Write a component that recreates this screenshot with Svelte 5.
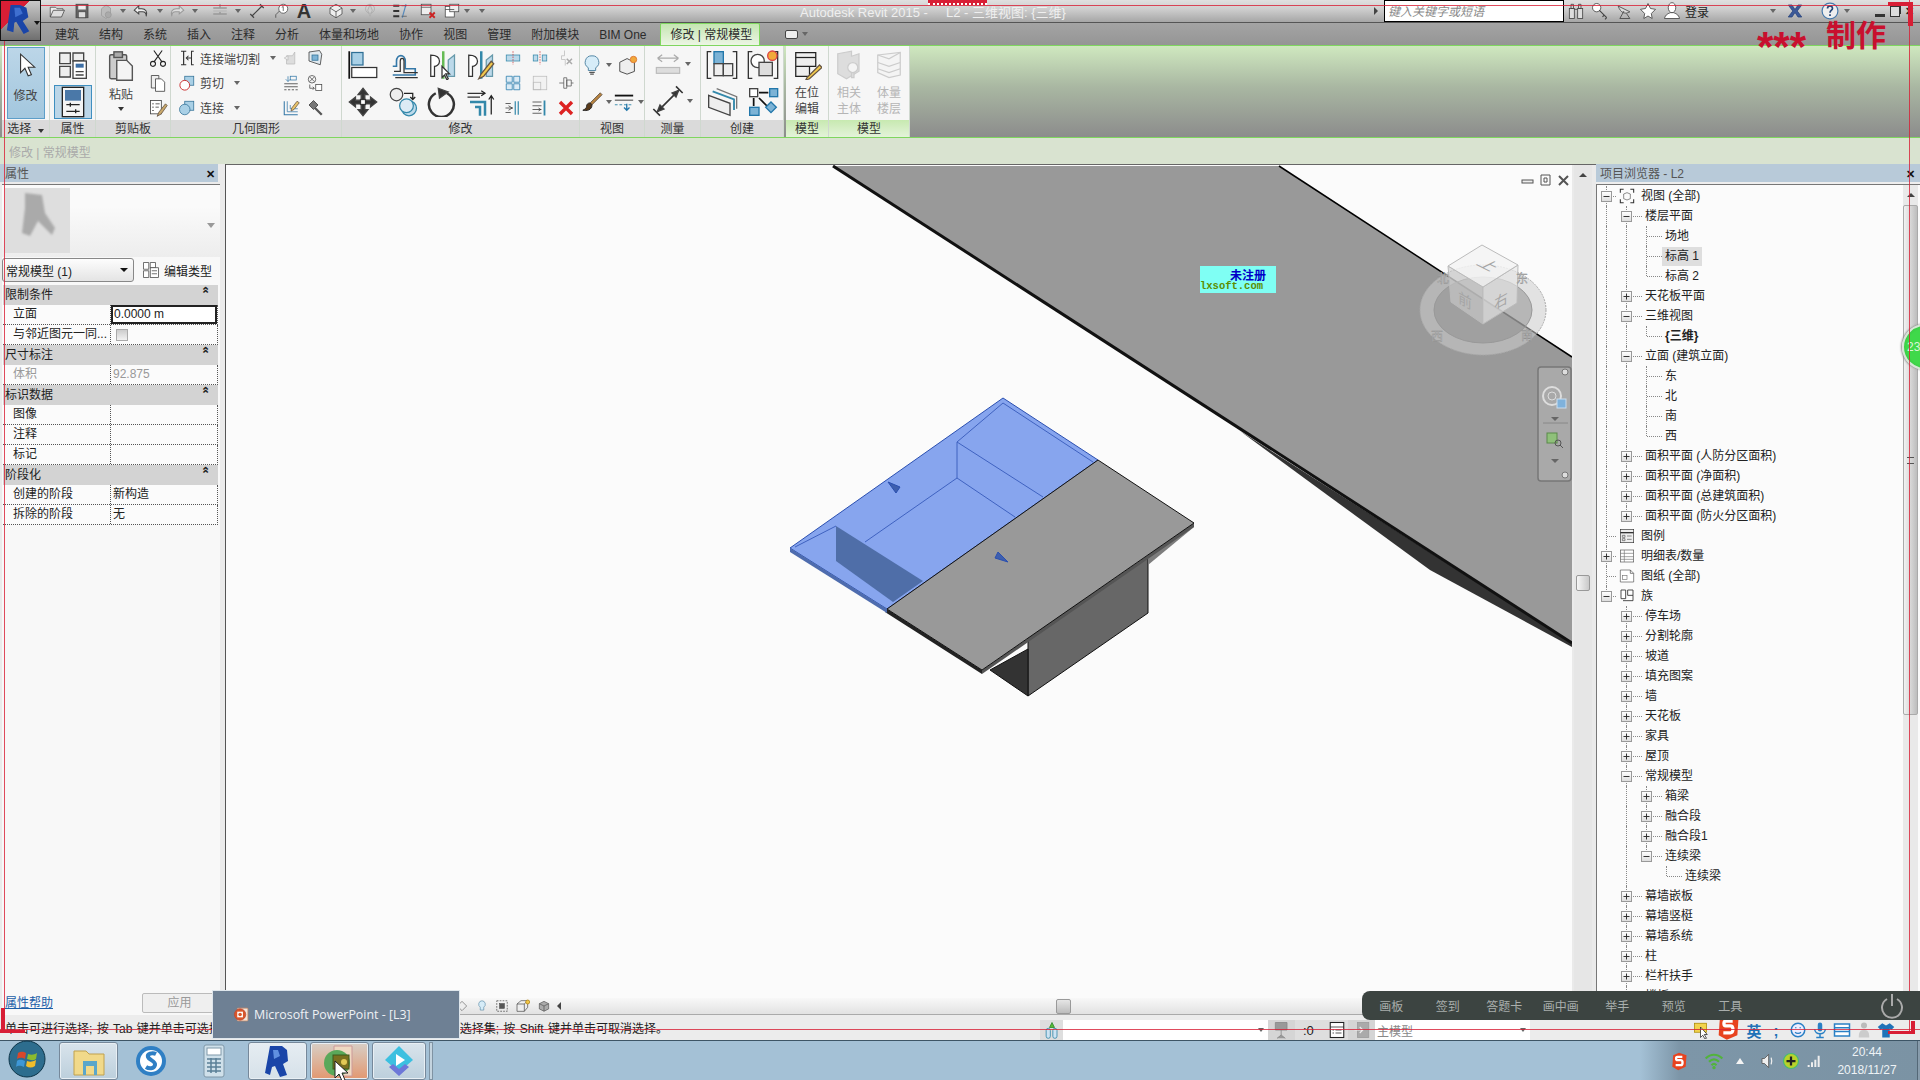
<script>
	const I = {
		open: '<path d="M3 7h7l2 2h8v3H8l-5 8z" fill="#eee"/><path d="M3 20l4-9h15l-4 9z" fill="#ddd"/>',
		save: '<rect x="4" y="3" width="16" height="18" fill="#666"/><rect x="7" y="4" width="10" height="6" fill="#eee" stroke="none"/><rect x="7" y="13" width="10" height="8" fill="#ddd"/>',
		sync: '<path d="M6 9l6-5 6 4v9l-6 5-6-4z" fill="#bbb" stroke="#999"/><circle cx="15" cy="17" r="4" fill="#aaa" stroke="#999"/>',
		undo: '<path d="M9 5L3 11l6 5v-3h5c3 0 5 2 5 6 2-6-1-10-6-10H9z" fill="#eee" stroke-width="1.4"/>',
		redo: '<path d="M15 5l6 6-6 5v-3h-5c-3 0-5 2-5 6-2-6 1-10 6-10h4z" fill="#ddd" stroke="#999" stroke-width="1.4"/>',
		thin: '<path d="M3 8h18M3 16h18M12 3v4M12 13v3" stroke="#999" stroke-width="2"/><rect x="3" y="11" width="18" height="2" fill="#bbb" stroke="none"/>',
		dim: '<path d="M5 19L19 5M8 21l-5-5M21 8l-5-5" stroke-width="1.6"/>',
		tag: '<circle cx="15" cy="9" r="6" fill="#fff"/><path d="M10 12l-5 5v4M13 7l2-1v6" />',
		threeD: '<path d="M12 3l8 5v8l-8 5-8-5V8z" fill="#eee"/><path d="M4 8l8 5 8-5M12 13v8"/>',
		bulbS: '<path d="M12 3l3 8-3 8-3-8z" fill="#ccc" stroke="#aaa"/><circle cx="12" cy="9" r="6" stroke="#aaa"/>',
		thinLines: '<path d="M3 5h8M3 12h8M3 19h8" stroke="#333" stroke-width="2.5"/><path d="M20 3l-5 18" stroke="#5588bb" stroke-width="1.5"/><path d="M14 5h7M14 19h7" stroke="#555"/>',
		closeWin: '<rect x="3" y="3" width="13" height="14" fill="#eee"/><path d="M3 7h13"/><path d="M14 14l7 7M21 14l-7 7" stroke="#c22" stroke-width="2.4"/>',
		switchWin: '<rect x="3" y="6" width="12" height="14" fill="#fff"/><rect x="9" y="3" width="12" height="10" fill="#eee"/><path d="M3 10h12" />',
		binoc: '<rect x="4" y="9" width="6" height="12" fill="#ddd"/><rect x="14" y="9" width="6" height="12" fill="#ddd"/><path d="M6 4h3v5H6zM15 4h3v5h-3zM10 10h4"/>',
		key: '<circle cx="8" cy="8" r="5" fill="#fff"/><path d="M11 11l9 9M17 17l-2 2M20 20l-2 2" stroke-width="1.4"/>',
		sat: '<path d="M5 6c3 9 9 10 14 7z" fill="#ddd"/><path d="M12 12l-5 9h12l-4-6" />',
		star: '<path d="M12 3l3 6 6 1-5 5 1 6-5-3-5 3 1-6-5-5 6-1z" fill="#fff"/>',
		user: '<ellipse cx="12" cy="8" rx="4.5" ry="6" fill="#fff"/><path d="M3 21c1-5 5-6 7-7h4c2 1 6 2 7 7z" fill="#fff"/>',
		xch: '<path d="M3 4h5l4 6 4-6h5l-6 8 6 8h-5l-4-6-4 6H3l6-8z" fill="#3d5a9a" stroke="#24407a"/>',
		help: '<circle cx="12" cy="12" r="9.5" fill="#eee" stroke="#47a" stroke-width="1.4"/><path d="M9 9c0-4 6-4 6 0 0 2-3 2-3 5M12 16v2" stroke="#247" stroke-width="2"/>',
		pointer: '<path d="M7 2v17l4-4 3 7 3-1-3-7h6z" fill="#fff" stroke="#333"/>',
		cubes: '<path d="M2 3h8v8H2zM2 13h8v8H2zM12 3h8v6h-8z" fill="#eee"/><rect x="12" y="9" width="10" height="13" fill="#fff"/><rect x="14" y="11" width="6" height="3" fill="#3c6ea5" stroke="none"/><path d="M14 17h6M14 19.5h6"/>',
		props: '<rect x="4" y="1" width="16" height="22" fill="#f4f4f4" stroke="#222"/><rect x="6" y="3" width="12" height="8" fill="#4a78a8" stroke="none"/><path d="M7 14h10M7 19h10M10 12.5v3M14 17.5v3" stroke="#222"/>',
		paste: '<rect x="4" y="4" width="12" height="17" rx="1" fill="#ccc" stroke="#555"/><rect x="7" y="2" width="6" height="4" fill="#aaa" stroke="#555"/><path d="M9 8h7l4 4v10H9z" fill="#f4f4f4" stroke="#555"/>',
		cut: '<path d="M7 3l10 14M17 3L7 17" stroke="#222" stroke-width="1.3"/><circle cx="6" cy="19" r="3" stroke="#222" stroke-width="1.3"/><circle cx="18" cy="19" r="3" stroke="#222" stroke-width="1.3"/>',
		copy: '<path d="M4 3h9v15H4z" fill="#eee"/><path d="M9 7h7l4 4v11H9z" fill="#fff"/>',
		match: '<rect x="3" y="3" width="13" height="16" fill="#fff"/><path d="M5 7h2M9 7h5M5 11h2M9 11h4M5 15h2"/><path d="M21 7l-8 10-2 5 5-3 7-10z" fill="#c9a86b" stroke="#654"/>',
		joinCut: '<path d="M4 3h7M4 21h7M7.5 3v18" stroke="#333" stroke-width="1.6"/><path d="M21 3h-3v18h3M18 12h-7M14 9l-3 3 3 3" stroke="#333" stroke-width="1.4"/>',
		cutBox: '<rect x="9" y="3" width="12" height="12" fill="#a9d0e6" stroke="#2f6f95"/><circle cx="9" cy="15" r="6.5" fill="#fff" stroke="#c33" stroke-width="1.3"/>',
		joinBox: '<rect x="9" y="3" width="12" height="12" fill="#a9d0e6" stroke="#2f6f95"/><circle cx="9" cy="14" r="7" fill="#a9d0e6" stroke="#2f6f95"/>',
		geoA: '<path d="M6 9h8l3-5v16H6z" fill="#ddd" stroke="#bbb"/><path d="M3 12l5-3v6z" fill="#eee" stroke="#bbb"/>',
		geoB: '<path d="M4 4l14-2 3 5-2 14-15-5z" fill="#dfe8ee" stroke="#333"/><rect x="8" y="8" width="8" height="7" fill="#7cb3d6" stroke="#2f6f95"/>',
		geoC: '<path d="M3 13h18M3 17h18" stroke="#333"/><path d="M3 21h18" stroke="#333" stroke-dasharray="3 2"/><path d="M8 3v7M5 7l3 3 3-3" stroke="#3478a8"/><rect x="11" y="3" width="8" height="5" stroke="#3478a8"/>',
		geoD: '<circle cx="8" cy="7" r="5"/><path d="M5 4l6 6M11 4l-6 6"/><rect x="13" y="14" width="8" height="8" fill="#fff"/><path d="M5 14v5h6M9 17l2 2-2 2"/>',
		paintWall: '<path d="M3 3v18h18" stroke="#3478a8" stroke-width="1.4"/><path d="M7 3v14h14M11 8v5h10" stroke="#3478a8"/><path d="M20 3l-7 9-1 4 4-2 7-9z" fill="#e8c36a" stroke="#654"/>',
		hammer: '<path d="M4 8l6-6 6 6-6 6z" fill="#777" stroke="#333"/><path d="M12 12l9 9" stroke="#555" stroke-width="3"/>',
		align: '<rect x="3" y="2" width="9" height="10" fill="#a9d0e6" stroke="#2f6f95"/><rect x="3" y="14" width="20" height="8" fill="#fff" stroke="#333"/><path d="M1 1v22" stroke="#111" stroke-width="1.4"/>',
		offset: '<path d="M3 20h18v-5h-8V9c0-6-7-6-7 0v4H3" fill="none" stroke="#3478a8" stroke-width="1.3"/><path d="M5 22h18M4 17h5V9c0-3 3-3 3 0v9h11" stroke="#333"/>',
		mirrorA: '<path d="M3 4c5 0 7 2 7 5s-3 4-4 4v8H3z" fill="#fff" stroke="#333"/><path d="M13 1v22" stroke="#6b5" stroke-width="2"/><path d="M22 4l-5 4v13h5z" fill="#bcd9ea" stroke="#69a"/><path d="M12 13v9l2-2 2 4 1-1-2-4h3z" fill="#fff" stroke="#333"/>',
		mirrorB: '<path d="M3 4c5 0 7 2 7 5s-3 4-4 4v8H3z" fill="#fff" stroke="#333"/><path d="M13 1v22" stroke="#38a" stroke-width="2"/><path d="M22 4l-5 4v13h5z" fill="#bcd9ea" stroke="#69a"/><path d="M21 9l-8 10-2 4 4-2 8-10z" fill="#f2c94c" stroke="#654"/>',
		move: '<path d="M12 1l4 5h-2.5v4.500H18V8l5 4-5 4v-2.500h-4.500V18H16l-4 5-4-5h2.500v-4.500H6V16l-5-4 5-4v2.500h4.500V6H8z" fill="#333"/><rect x="10" y="10" width="4" height="4" fill="#fff" stroke="#333"/>',
		copyEl: '<circle cx="6" cy="6" r="5" fill="#eee"/><circle cx="16" cy="17" r="6" fill="#bcd9ea" stroke="#38a"/><circle cx="14" cy="15" r="5.500" fill="#dcebf5" stroke="#38a"/><path d="M12 5h7v5M17 8l2 2 2-2" stroke="#222"/>',
		rotate: '<path d="M7 5a10 10 0 1 0 9 0" stroke="#333" stroke-width="2"/><path d="M9 1l8 3-7 5z" fill="#333"/>',
		trim: '<path d="M2 5h14M2 8h10" stroke="#333"/><path d="M4 12h12v11M8 16h4v7" stroke="#38a" stroke-width="2"/><path d="M21 22V8M19 10l2-3 2 3M13 3l3 2-3 2" stroke="#222"/>',
		splitA: '<rect x="3" y="8" width="18" height="8" fill="#bcd9ea" stroke="#38a"/><path d="M12 3v18" stroke="#c33" stroke-dasharray="2 1.500"/>',
		splitB: '<rect x="3" y="8" width="6" height="8" fill="#bcd9ea" stroke="#38a"/><rect x="15" y="8" width="6" height="8" fill="#bcd9ea" stroke="#38a"/><path d="M12 3v18" stroke="#c33" stroke-dasharray="2 1.500"/>',
		pinX: '<path d="M10 2v7H6v5h5v8" stroke="#bbb"/><path d="M13 13l7 7M20 13l-7 7" stroke="#aaa" stroke-width="2"/>',
		array: '<path d="M3 3h8v8H3zM13 3h8v8h-8zM3 13h8v8H3zM13 13h8v8h-8z" fill="#dcebf5" stroke="#27a"/>',
		scale: '<rect x="3" y="3" width="18" height="18" fill="#f2f2f2" stroke="#bbb"/><rect x="3" y="11" width="10" height="10" stroke="#bbb"/>',
		unpin: '<path d="M3 12h6M9 5h4v14H9zM13 8h6v8h-6zM19 12h3" stroke="#555"/>',
		ext: '<path d="M2 6h7M2 12h10M2 18h7M6 9l5 3-5 3" stroke="#333"/><path d="M15 3v18M19 3v18" stroke="#38a" stroke-width="1.6"/>',
		ext2: '<path d="M2 4h12M2 9h12M2 14h12M2 19h12M10 12l3 2-3 2" stroke="#333"/><path d="M18 2v20" stroke="#38a" stroke-width="2.4"/>',
		del: '<path d="M4 4l16 16M20 4L4 20" stroke="#d22" stroke-width="4.500"/>',
		bulb: '<path d="M12 2a7 7 0 0 0-4 13v3h8v-3a7 7 0 0 0-4-13z" fill="#d6ecf8" stroke="#4a7f9f"/><path d="M9 20h6M10 22h4" stroke="#555" stroke-width="1.500"/>',
		sun: '<path d="M3 9l8-4 8 4v10l-8 3-8-3z" fill="#eee"/><circle cx="18" cy="6" r="3.500" fill="#f2a93b" stroke="#d73"/>',
		brush: '<path d="M21 2L10 13l2 2L23 4z" fill="#b98440" stroke="#654"/><path d="M10 13c-3 0-4 2-4 4 0 2-2 3-4 4 4 1 10 0 10-6z" fill="#5a3b1a" stroke="#222"/>',
		lines: '<path d="M2 5h20" stroke="#111" stroke-width="2"/><path d="M2 10h20" stroke="#333"/><path d="M2 15h20" stroke="#38a" stroke-dasharray="3 2"/><path d="M15 14v7M12 18l3 3 3-3" stroke="#27a" stroke-width="1.400"/>',
		measure: '<path d="M3 7h18M3 7l4-3M3 7l4 3M21 7l-4-3M21 7l-4 3" stroke="#aaa"/><rect x="2" y="15" width="20" height="5" fill="#ddd" stroke="#bbb"/>',
		dimL: '<path d="M4 20L20 4M1 18l5 5M18 1l5 5" stroke="#333" stroke-width="1.200"/><path d="M4 20l5-2-3-3zM20 4l-5 2 3 3z" fill="#333"/>',
		crA: '<path d="M4 2H1v20h3M20 2h3v20h-3" stroke="#333"/><rect x="6" y="2" width="7" height="9" fill="#7cb3d6" stroke="#27a"/><rect x="6" y="11" width="7" height="9" fill="#eee"/><rect x="13" y="11" width="7" height="9" fill="#eee"/>',
		crB: '<path d="M4 2H1v20h3M20 2h3v20h-3" stroke="#333"/><circle cx="8" cy="9" r="5" fill="#fff"/><rect x="9" y="10" width="10" height="10" fill="#ddd"/><circle cx="19" cy="5" r="3.500" fill="#f2a93b" stroke="#d44"/>',
		crC: '<path d="M2 7l16 6v9L2 16z" fill="#eee"/><path d="M5 4l16 6v8" stroke="#38a" stroke-width="1.400"/><path d="M8 2l15 6v9" stroke="#777"/>',
		crD: '<rect x="2" y="2" width="6" height="6" fill="#fff"/><rect x="17" y="2" width="6" height="6" fill="#7cb3d6" stroke="#27a"/><path d="M9 5h7M5 9v6M9 9l6 6" stroke="#111" stroke-width="1.300"/><rect x="2" y="16" width="7" height="6" fill="#7cb3d6" stroke="#27a"/><path d="M18 12l4 4-4 4-4-4z" fill="#7cb3d6" stroke="#27a"/>',
		inplace: '<path d="M3 2h16v11H3zM3 13h11v8H3z" fill="#eee" stroke="#222"/><path d="M3 6h16" stroke="#222"/><path d="M22 12L12 22l-1 2 3-1L24 14z" fill="#f2c94c" stroke="#654"/>',
		hostOff: '<path d="M3 3l11-2v4l6-2v14l-10 6-7-4z" fill="#ddd" stroke="#ccc"/><circle cx="15" cy="14" r="4" fill="#f4f4f4" stroke="#ccc"/><path d="M14 18h2v4h-2z" fill="#ddd" stroke="#ccc"/>',
		massOff: '<path d="M3 4l18-2v18l-9 2-9-4z" fill="#f4f4f4" stroke="#ccc"/><path d="M3 10l9 3 9-3M3 15l9 3 9-3M3 4l9 3 9-5" stroke="#ccc"/>',
		editType: '<path d="M2 2h7v9H2zM2 13h7v9H2zM11 2h7v7h-7z" fill="#fff"/><rect x="11" y="9" width="11" height="13" fill="#fff"/><path d="M13 13h7M13 17h7"/>',
		legend: '<rect x="2" y="2" width="20" height="20" fill="#eee" stroke="#333"/><path d="M2 7h20" stroke="#333" stroke-width="2"/><path d="M5 11h4v3H5zM5 16h4v3H5zM12 12h7M12 17h7" stroke="#555"/>',
		sched: '<rect x="2" y="3" width="20" height="18" fill="#fff" stroke="#555"/><path d="M2 8h20M2 13h20M2 17h20M8 3v18" stroke="#777"/>',
		sheet: '<path d="M2 3h15l5 5v13H2z" fill="#fff" stroke="#555"/><path d="M17 3v5h5"/><rect x="5" y="11" width="7" height="6" stroke="#777"/>',
		view3: '<path d="M2 7V2h5M17 2h5v5M22 17v5h-5M7 22H2v-5" stroke="#333" stroke-width="1.600"/><path d="M7 9l5-2 5 2v7l-5 2-5-2z" stroke="#555"/>',
		fam: '<path d="M3 3h7v13H3zM13 3h8v8h-8zM6 19h15V11" fill="#fff" stroke="#333" stroke-width="1.300"/>',
		wset: '<rect x="5" y="10" width="5" height="12" rx="2.500" fill="#cde3f2" stroke="#38a"/><rect x="13" y="10" width="5" height="12" rx="2.500" fill="#cde3f2" stroke="#38a"/><path d="M12 3l-3 6h6z" fill="#5b3" stroke="#383"/>',
		filter: '<path d="M4 3h14v9H4zM11 12v6M6 22l5-4 5 4" stroke="#888" fill="#999"/>',
		editBar: '<rect x="3" y="2" width="18" height="20" fill="#fff" stroke="#222" stroke-width="1.400"/><path d="M3 8h18M6 12h2M10 12h8M6 16h2M10 16h8" stroke="#222"/>',
		exitG: '<rect x="6" y="2" width="15" height="20" fill="#aaa" stroke="#999"/><path d="M2 12h11M9 8l4 4-4 4" stroke="#eee" stroke-width="1.500"/>',
		sun2: '<path d="M12 4l8 8-8 8-8-8z" fill="#eee" stroke="#555"/>',
		bulbVB: '<path d="M12 3a6 6 0 0 0-3 11v5h6v-5a6 6 0 0 0 -3-11z" stroke="#4a7f9f" fill="#d6ecf8"/>',
		shadow: '<rect x="3" y="3" width="18" height="18" stroke="#222" stroke-dasharray="3 2"/><rect x="8" y="8" width="8" height="8" fill="#555"/>',
		crop: '<path d="M3 9h11v11H3z" fill="#eee"/><path d="M3 9l6-5h10l-5 5M19 4v10l-5 6" /><circle cx="19" cy="6" r="3" fill="#f2c94c" stroke="#a70"/>',
		box3: '<path d="M4 8l8-4 8 4v9l-8 4-8-4z" fill="#aaa"/><path d="M4 8l8 4 8-4M12 12v9"/>',
		face: '<circle cx="12" cy="12" r="9" stroke="#2a80c5" stroke-width="2" fill="#eef"/><path d="M8 9h2M14 9h2M8 15c2 2 6 2 8 0" stroke="#2a80c5" stroke-width="1.500"/>',
		mic: '<rect x="9" y="2" width="6" height="12" rx="3" fill="#2a80c5" stroke="none"/><path d="M5 11c0 8 14 8 14 0M12 18v3M7 22h10" stroke="#2a80c5" stroke-width="2"/>',
		kb: '<rect x="2" y="4" width="20" height="16" stroke="#2a80c5" stroke-width="2" fill="#fff"/><path d="M2 9h20M2 14h20" stroke="#2a80c5" stroke-width="2"/>',
		person: '<circle cx="12" cy="6" r="4" fill="#bbb" stroke="none"/><path d="M5 22c0-9 3-10 7-10s7 1 7 10z" fill="#ccc" stroke="none"/>',
		shirt: '<path d="M7 3L1 8l4 4 2-2v12h10V10l2 2 4-4-6-5-5 3z" fill="#1f72b8" stroke="none"/>',
		sg: '<path d="M12 2l9 3-1 14-9 4-7-4 1-14z" fill="#e8431f" stroke="none"/><path d="M16 7H10c-2 0-2 4 0 4h4c3 0 3 6 0 6H8" stroke="#fff" stroke-width="2.800"/>',
		cursorK: '<rect x="2" y="3" width="16" height="12" fill="#f2d34c" stroke="#a80"/><path d="M10 8v14l3-3 3 5 2-1-3-5h4z" fill="#fff" stroke="#222"/>',
		wifi: '<path d="M2 9c6-6 14-6 20 0M6 13c4-4 8-4 12 0M9 17c2-2 4-2 6 0" stroke="#52b33c" stroke-width="2.600"/><circle cx="12" cy="20" r="2" fill="#52b33c" stroke="none"/>',
		spk: '<path d="M6 9h3l5-5v16l-5-5H6z" fill="#eee" stroke="#555"/><path d="M17 8c1 3 1 5 0 8" stroke="#eee" stroke-width="1.500"/>',
		plus: '<circle cx="12" cy="12" r="10" fill="#b7d22b" stroke="#4b7" stroke-width="1.500"/><path d="M12 6v12M6 12h12" stroke="#222" stroke-width="3"/>',
		bars: '<path d="M4 18v3M9 14v7M14 10v11M19 4v17" stroke="#eee" stroke-width="3"/>',
		ppt: '<rect x="6" y="3" width="15" height="18" rx="1" fill="#f3e6dc" stroke="#d08a60"/><circle cx="10" cy="12" r="8" fill="#d9562a" stroke="#b43"/><rect x="6" y="8" width="8" height="8" fill="#fff" stroke="none"/><circle cx="10" cy="12" r="2.500" fill="#d9562a" stroke="none"/>'
	};

	const qat = [
		['open', 57, 18], ['save', 82, 18], ['sync', 106, 18], ['caret', 123, 6], ['undo', 141, 18], ['caret', 160, 6],
		['redo', 177, 18], ['caret', 195, 6], ['thin', 220, 18], ['caret', 238, 6], ['dim', 257, 18], ['tag', 281, 18],
		['letter', 304, 18], ['threeD', 336, 18], ['caret', 353, 6], ['bulbS', 370, 18], ['thinLines', 400, 18],
		['closeWin', 428, 18], ['switchWin', 452, 18], ['caret', 467, 6], ['caret', 482, 6]
	];
	// gaps between quick access icons come from their centre positions
	const qatGaps = qat.map((q, i) => {
		const prev = i ? qat[i - 1] : ['', 40, 0];
		return q[1] - q[2] / 2 - (prev[1] + prev[2] / 2);
	});

	const tabs = ['建筑', '结构', '系统', '插入', '注释', '分析', '体量和场地', '协作', '视图', '管理', '附加模块', 'BIM One'];

	const propRows = [
		{ head: '限制条件' },
		{ k: '立面', v: '0.0000 m', input: true },
		{ k: '与邻近图元一同...', check: true },
		{ head: '尺寸标注' },
		{ k: '体积', v: '92.875', off: true },
		{ head: '标识数据' },
		{ k: '图像' },
		{ k: '注释' },
		{ k: '标记' },
		{ head: '阶段化' },
		{ k: '创建的阶段', v: '新构造' },
		{ k: '拆除的阶段', v: '无' }
	];

	const tree = [
		['视图 (全部)', 0, '-', 'view3'], ['楼层平面', 1, '-'], ['场地', 2], ['标高 1', 2, '', '', 'sel'], ['标高 2', 2],
		['天花板平面', 1, '+'], ['三维视图', 1, '-'], ['{三维}', 2, '', '', 'bold'], ['立面 (建筑立面)', 1, '-'],
		['东', 2], ['北', 2], ['南', 2], ['西', 2],
		['面积平面 (人防分区面积)', 1, '+'], ['面积平面 (净面积)', 1, '+'], ['面积平面 (总建筑面积)', 1, '+'], ['面积平面 (防火分区面积)', 1, '+'],
		['图例', 0, '', 'legend'], ['明细表/数量', 0, '+', 'sched'], ['图纸 (全部)', 0, '', 'sheet'], ['族', 0, '-', 'fam'],
		['停车场', 1, '+'], ['分割轮廓', 1, '+'], ['坡道', 1, '+'], ['填充图案', 1, '+'], ['墙', 1, '+'], ['天花板', 1, '+'],
		['家具', 1, '+'], ['屋顶', 1, '+'], ['常规模型', 1, '-'],
		['箱梁', 2, '+'], ['融合段', 2, '+'], ['融合段1', 2, '+'], ['连续梁', 2, '-'], ['连续梁', 3],
		['幕墙嵌板', 1, '+'], ['幕墙竖梃', 1, '+'], ['幕墙系统', 1, '+'], ['柱', 1, '+'], ['栏杆扶手', 1, '+'], ['楼板', 1, '+']
	];

	// does level k carry on below row i?
	function carries(i, k) {
		for (let j = i + 1; j < tree.length; j++) {
			if (tree[j][1] < k) return false;
			if (tree[j][1] === k) return true;
		}
		return false;
	}

	const barItems = ['画板', '签到', '答题卡', '画中画', '举手', '预览', '工具'];
	const imeItems = ['face', 'mic', 'kb', 'person', 'shirt'];
</script>

{#snippet ic(name, size = 18)}
	<svg class="ic" width={size} height={size} viewBox="0 0 24 24">{@html I[name]}</svg>
{/snippet}

{#snippet arrow()}
	<span class="caret"></span>
{/snippet}

<div class="app">
	<!-- title bar -->
	<header class="titlebar">
		<div class="qat">
			{#each qat as q, i}
				<span class="qat-item" style="margin-left:{qatGaps[i]}px;width:{q[2]}px">
					{#if q[0] === 'caret'}
						{@render arrow()}
					{:else if q[0] === 'letter'}
						<span class="qat-a">A</span>
					{:else}
						{@render ic(q[0], 18)}
					{/if}
				</span>
			{/each}
		</div>
		<div class="doc-title">Autodesk Revit 2015 -&nbsp;&nbsp;&nbsp;&nbsp;&nbsp;L2 - 三维视图: &#123;三维&#125;</div>
		<span class="search-arrow"></span>
		<div class="search">键入关键字或短语</div>
		<div class="title-tools">
			{@render ic('binoc', 20)}
			{@render ic('key', 20)}
			{@render ic('sat', 20)}
			{@render ic('star', 20)}
			{@render ic('user', 20)}
			<span class="login">登录</span>
			<span class="gap-a"></span>
			{@render arrow()}
			<span class="gap-b"></span>
			{@render ic('xch', 18)}
			<span class="gap-c"></span>
			{@render ic('help', 20)}
			{@render arrow()}
		</div>
		<div class="win-btns">
			<span class="w-min"></span>
			<span class="w-max"></span>
			<span class="w-close">✕</span>
		</div>
	</header>

	<!-- tabs -->
	<nav class="tabs">
		{#each tabs as t}
			<span class="tab">{t}</span>
		{/each}
		<span class="tab active">修改 | 常规模型</span>
		<span class="tab-toggle"></span>
		{@render arrow()}
	</nav>

	<!-- ribbon -->
	<section class="ribbon">
		<div class="panel p-select">
			<div class="body">
				<div class="bigbtn">
					{@render ic('pointer', 26)}
					<span>修改</span>
				</div>
			</div>
			<div class="plabel">选择 <span class="caret dark"></span></div>
		</div>
		<div class="panel p-props">
			<div class="body col">
				{@render ic('cubes', 32)}
				<div class="selbtn">{@render ic('props', 32)}</div>
			</div>
			<div class="plabel">属性</div>
		</div>
		<div class="panel p-clip">
			<div class="body">
				<div class="paste">
					{@render ic('paste', 34)}
					<span>粘贴</span>
					{@render arrow()}
				</div>
				<div class="stack">
					{@render ic('cut', 20)}
					{@render ic('copy', 20)}
					{@render ic('match', 20)}
				</div>
			</div>
			<div class="plabel">剪贴板</div>
		</div>
		<div class="panel p-geo">
			<div class="body">
				<div class="geo-list">
					<div class="geo-row">{@render ic('joinCut', 18)}<span>连接端切割</span>{@render arrow()}</div>
					<div class="geo-row">{@render ic('cutBox', 18)}<span>剪切</span>{@render arrow()}</div>
					<div class="geo-row">{@render ic('joinBox', 18)}<span>连接</span>{@render arrow()}</div>
				</div>
				<div class="stack w24">
					{@render ic('geoA', 18)}
					{@render ic('geoC', 18)}
					{@render ic('paintWall', 18)}
				</div>
				<div class="stack w24">
					{@render ic('geoB', 18)}
					{@render ic('geoD', 18)}
					{@render ic('hammer', 18)}
				</div>
			</div>
			<div class="plabel">几何图形</div>
		</div>
		<div class="panel p-mod">
			<div class="body">
				<div class="bigs">
					{@render ic('align', 30)}
					{@render ic('offset', 30)}
					{@render ic('mirrorA', 30)}
					{@render ic('mirrorB', 30)}
					{@render ic('move', 30)}
					{@render ic('copyEl', 30)}
					{@render ic('rotate', 30)}
					{@render ic('trim', 30)}
				</div>
				<div class="smalls">
					{@render ic('splitA', 18)}
					{@render ic('splitB', 18)}
					{@render ic('pinX', 18)}
					{@render ic('array', 18)}
					{@render ic('scale', 18)}
					{@render ic('unpin', 18)}
					{@render ic('ext', 18)}
					{@render ic('ext2', 18)}
					{@render ic('del', 18)}
				</div>
			</div>
			<div class="plabel">修改</div>
		</div>
		<div class="panel p-view">
			<div class="body two">
				<span class="cell2">{@render ic('bulb', 22)}{@render arrow()}</span>
				<span class="cell2">{@render ic('sun', 22)}</span>
				<span class="cell2">{@render ic('brush', 22)}{@render arrow()}</span>
				<span class="cell2">{@render ic('lines', 22)}{@render arrow()}</span>
			</div>
			<div class="plabel">视图</div>
		</div>
		<div class="panel p-meas">
			<div class="body col2">
				<span class="cell2">{@render ic('measure', 28)}{@render arrow()}</span>
				<span class="cell2">{@render ic('dimL', 32)}{@render arrow()}</span>
			</div>
			<div class="plabel">测量</div>
		</div>
		<div class="panel p-create">
			<div class="body two">
				<span class="cell2">{@render ic('crA', 32)}</span>
				<span class="cell2">{@render ic('crB', 32)}</span>
				<span class="cell2">{@render ic('crC', 32)}</span>
				<span class="cell2">{@render ic('crD', 32)}</span>
			</div>
			<div class="plabel">创建</div>
		</div>
		<div class="panel p-model green">
			<div class="body col tight">
				{@render ic('inplace', 30)}
				<span class="two-line">在位<br />编辑</span>
			</div>
			<div class="plabel">模型</div>
		</div>
		<div class="panel p-model2 green">
			<div class="body">
				<div class="col tight half off">
					{@render ic('hostOff', 30)}
					<span class="two-line">相关<br />主体</span>
				</div>
				<div class="col tight half off">
					{@render ic('massOff', 30)}
					<span class="two-line">体量<br />楼层</span>
				</div>
			</div>
			<div class="plabel">模型</div>
		</div>
	</section>

	<div class="options">修改 | 常规模型</div>

	<div class="main">
		<!-- properties palette -->
		<aside class="props">
			<div class="dock-head">属性<span class="dock-x">✕</span></div>
			<div class="props-inner">
				<div class="preview">
					<div class="thumb">
						<svg class="thumb-shape" width="65" height="65" viewBox="0 0 65 65">
							<path d="M20 5l17 2 3 18 10 15-3 7-14-14-8 15-8-3 3-25z" fill="#aaa" />
						</svg>
					</div>
					<span class="preview-arrow"></span>
				</div>
				<div class="type-row">
					<div class="type-select">常规模型 (1)<span class="caret black"></span></div>
					{@render ic('editType', 18)}
					<span class="type-edit">编辑类型</span>
				</div>
				<div class="ptable">
					{#each propRows as r}
						{#if r.head}
							<div class="phead">{r.head}<span class="chev">⌃</span></div>
						{:else}
							<div class="prow" class:off={r.off}>
								<span class="pk">{r.k}</span>
								<span class="pv" class:input={r.input}>
									{#if r.check}<span class="check"></span>{/if}
									{r.v ?? ''}
								</span>
							</div>
						{/if}
					{/each}
				</div>
				<div class="props-foot">
					<span class="help-link">属性帮助</span>
					<span class="apply">应用</span>
				</div>
			</div>
		</aside>

		<!-- drawing area -->
		<div class="center">
			<div class="center-top">
				<svg class="viewport" width="1346" height="833" viewBox="226 165 1346 833">
					<rect x="226" y="165" width="1346" height="833" fill="#fbfbfb" />
					<!-- long slab -->
					<polygon points="1240,431 1330,497 1430,570 1572,647 1572,643" fill="#333" />
					<polygon points="833,166 1279,166 1572,357 1572,643" fill="#999" />
					<line x1="1279" y1="166" x2="1572" y2="357" stroke="#000" stroke-width="1.500" />
					<line x1="833" y1="166" x2="1572" y2="643" stroke="#111" stroke-width="3" />

					<!-- box beam -->
					<polygon points="1028,637 1148,557 1148,613 1028,696" fill="#676767" stroke="#111" />
					<polygon points="990,670 1028,649 1028,696" fill="#333" stroke="#111" />
					<polygon points="1194,523 1194,527 1148,565 1148,555" fill="#7d7d7d" />
					<polygon points="887,609 982,670 982,674 885,612" fill="#222" />
					<polygon points="982,670 1194,523 1194,527 982,674" fill="#555" />

					<!-- blue (selected) half -->
					<polygon points="790,548 887,609 1098,460 1003,398" fill="#87a5ee" stroke="#2a4fb0" />
					<polygon points="790,548 790,552 887,613 887,609" fill="#4e6cae" />
					<polygon points="836,526 923,581 893,602 836,561" fill="#4f6ea8" />
					<g stroke="#3f62c0" fill="none">
						<path d="M1003,403 L957,442 L1043,497 M957,442 V478 L1015,517 M957,478 L865,542 M1003,403 L1093,462 M795,547 L836,526" />
					</g>
					<polygon points="888,482 900,487 896,493" fill="#3e5fae" stroke="#2a4fb0" />

					<!-- grey half -->
					<polygon points="1098,460 1194,523 982,670 887,609" fill="#999" stroke="#111" />
					<polygon points="998,552 1008,562 995,558" fill="#3e5fae" stroke="#2a4fb0" />

					<!-- watermark -->
					<rect x="1200" y="266" width="76" height="27" fill="#7ffff4" />
					<text x="1266" y="280" text-anchor="end" class="wm1">未注册</text>
					<text x="1200" y="289" class="wm2">lxsoft.com</text>

					<!-- view controls -->
					<g stroke="#555" fill="none">
						<rect x="1522" y="180" width="11" height="3" fill="#eee" />
						<path d="M1541,175h9v10h-9z M1544,178h3v4h-3z" />
						<path d="M1559,176l9,9M1568,176l-9,9" stroke-width="2" />
					</g>

					<!-- view cube -->
					<ellipse cx="1483" cy="310" rx="63" ry="45" fill="#cdcdcd" fill-opacity="0.55" stroke="#aaa" stroke-dasharray="2 1" />
					<ellipse cx="1483" cy="310" rx="49" ry="33" fill="#8a8a8a" fill-opacity="0.5" stroke="#999" />
					<polygon points="1448,266 1483,287 1483,324 1451,302" fill="#ccc" fill-opacity="0.6" stroke="#bbb" />
					<polygon points="1518,265 1483,287 1483,324 1517,303" fill="#e6e6e6" fill-opacity="0.65" stroke="#bbb" />
					<polygon points="1482,245 1518,265 1483,287 1448,266" fill="#f3f3f3" fill-opacity="0.85" stroke="#bbb" />
					<text class="cube" transform="matrix(1 0.5 -1 0.5 1483 268)" text-anchor="middle">上</text>
					<text class="cube" transform="matrix(0.9 0.5 0 1 1465 306)" text-anchor="middle">前</text>
					<text class="cube" transform="matrix(0.9 -0.5 0 1 1501 306)" text-anchor="middle">右</text>
					<text class="cube light" x="1443" y="283" text-anchor="middle">北</text>
					<text class="cube light" x="1522" y="283" text-anchor="middle">东</text>
					<text class="cube light" x="1437" y="341" text-anchor="middle">西</text>
					<text class="cube light" x="1527" y="340" text-anchor="middle">南</text>

					<!-- nav bar -->
					<rect x="1538" y="367" width="33" height="114" rx="3" fill="#a9a9a9" stroke="#777" stroke-width="1.500" />
					<circle cx="1565" cy="372" r="3" fill="#ddd" stroke="#777" />
					<circle cx="1565" cy="475" r="3" fill="#ddd" stroke="#777" />
					<circle cx="1552" cy="396" r="9" fill="none" stroke="#ddd" stroke-width="2" />
					<circle cx="1552" cy="396" r="4" fill="none" stroke="#ddd" />
					<rect x="1557" y="399" width="9" height="9" fill="#7fb2dc" stroke="#cde" />
					<polygon points="1551,417 1559,417 1555,421" fill="#666" />
					<line x1="1543" y1="423" x2="1568" y2="423" stroke="#888" />
					<rect x="1547" y="433" width="10" height="10" fill="#8fc07a" stroke="#5a8a4a" />
					<circle cx="1558" cy="443" r="3" fill="none" stroke="#555" />
					<line x1="1560" y1="445" x2="1563" y2="448" stroke="#555" />
					<polygon points="1551,459 1559,459 1555,463" fill="#666" />
				</svg>
				<div class="vscroll">
					<span class="up"></span>
					<span class="vthumb"></span>
				</div>
			</div>
			<div class="hbar">
				<div class="view-icons">
					{@render ic('sun2', 14)}
					{@render ic('bulbVB', 14)}
					{@render ic('shadow', 14)}
					{@render ic('crop', 16)}
					{@render ic('box3', 14)}
					<span class="left-tri"></span>
				</div>
				<span class="hthumb"></span>
			</div>
		</div>

		<!-- project browser -->
		<aside class="browser">
			<div class="dock-head">项目浏览器 - L2<span class="dock-x">✕</span></div>
			<div class="tree-wrap">
				<div class="tree">
					{#each tree as row, i}
						<div class="row">
							{#each Array(row[1] + 1) as _, k}
								<span
									class="cell"
									class:v={k < row[1] && carries(i, k)}
									class:tee={k === row[1] && carries(i, k)}
									class:corner={k === row[1] && !carries(i, k)}
								>
									{#if k === row[1] && row[2]}
										<span class="exp">
											<svg width="9" height="9" viewBox="0 0 9 9">
												<path d={row[2] === '+' ? 'M1.500 4.500h6M4.500 1.500v6' : 'M1.500 4.500h6'} stroke="#333" fill="none" />
											</svg>
										</span>
									{/if}
								</span>
							{/each}
							{#if row[3]}
								<span class="tree-ic">{@render ic(row[3], 16)}</span>
							{/if}
							<span class="label" class:icon-label={row[3]} class:sel={row[4] === 'sel'} class:bold={row[4] === 'bold'}>{row[0]}</span>
						</div>
					{/each}
				</div>
				<div class="tree-scroll">
					<span class="up"></span>
					<span class="tthumb"><span class="grip"></span></span>
				</div>
			</div>
		</aside>
	</div>

	<!-- status bar -->
	<footer class="status">
		<div class="status-text">单击可进行选择; 按 Tab 键并单击可选择其他项目; 按 Ctrl 键并单击可将新项目添加到选择集; 按 Shift 键并单击可取消选择。</div>
		<span class="st-ic">{@render ic('wset', 20)}</span>
		<div class="st-select sel-a"><span class="caret"></span></div>
		<span class="st-ic grey">{@render ic('filter', 20)}</span>
		<span class="st-zero">:0</span>
		<span class="st-ic">{@render ic('editBar', 18)}</span>
		<span class="st-ic grey">{@render ic('exitG', 18)}</span>
		<div class="st-select sel-b">主模型<span class="caret"></span></div>
		<div class="ime">
			<span class="ime-c">{@render ic('cursorK', 18)}</span>
			<span class="ime-c big">{@render ic('sg', 28)}</span>
			<span class="ime-c eng">英</span>
			<span class="ime-c eng">;</span>
			{#each imeItems as m}
				<span class="ime-c">{@render ic(m, 18)}</span>
			{/each}
		</div>
	</footer>

	<!-- taskbar -->
	<footer class="taskbar">
		<div class="orb">
			<svg width="38" height="38" viewBox="0 0 38 38">
				<circle cx="19" cy="19" r="18" fill="#2d6d8e" stroke="#0d3448" />
				<path d="M10 13c3-2 6-1 8 0l-1 6c-2-1-5-2-8 0z" fill="#d8482b" />
				<path d="M20 14c3 1 6 1 9-1l-1 6c-3 2-6 1-9 0z" fill="#8bbb2e" />
				<path d="M9 21c3-2 5-1 8 0l-1 6c-3-1-5-2-8 0z" fill="#3e97d6" />
				<path d="M19 21c3 1 5 1 9-1l-1 6c-3 2-6 2-9 0z" fill="#f0bd2b" />
			</svg>
		</div>
		<div class="tb pinned w59">
			<svg width="36" height="32" viewBox="0 0 36 32">
				<path d="M3 6h12l3 3h15v21H3z" fill="#f1d98a" stroke="#c0a14f" />
				<path d="M12 16h14v14h-3v-9H15v9h-3z" fill="#5aa6c9" />
			</svg>
		</div>
		<div class="tb free w60">
			<svg width="32" height="32" viewBox="0 0 32 32">
				<circle cx="16" cy="16" r="15" fill="#2f7fc4" />
				<circle cx="16" cy="16" r="11" fill="#fff" />
				<path d="M21 9c-4-2-9 0-8 3s8 4 7 8-6 4-9 2" fill="none" stroke="#2f7fc4" stroke-width="4" />
			</svg>
		</div>
		<div class="tb free w68">
			<svg width="24" height="34" viewBox="0 0 24 34">
				<rect x="2" y="1" width="20" height="32" rx="2" fill="#cfe0ea" stroke="#7f97a8" />
				<rect x="5" y="4" width="14" height="7" fill="#fff" stroke="#7f97a8" />
				<path d="M5 15h14M5 19h14M5 23h14M5 27h14M9 14v15M14 14v15" stroke="#5b7f97" stroke-width="1.500" />
			</svg>
		</div>
		<div class="tb pinned w59 light">
			<svg width="32" height="34" viewBox="0 0 32 34">
				<path d="M8 2h12l5 4 1 11-5 3 4 11-7 2-5-11-3 1-2 8-5-2z" fill="#1a45a8" />
				<path d="M11 6h5l2 6-6 3z" fill="#5f8fe0" />
			</svg>
		</div>
		<div class="tb pinned w59 hot">
			<svg width="36" height="36" viewBox="0 0 36 36">
				<path d="M12 3h18v30H12z" fill="#efd9c2" stroke="#c99" />
				<circle cx="15" cy="20" r="13" fill="#5aa85a" />
				<rect x="11" y="12" width="16" height="14" fill="#7a6f1f" stroke="#3c5a1c" />
				<circle cx="22" cy="19" r="3" fill="#e2c955" />
			</svg>
		</div>
		<div class="tb pinned w53">
			<svg width="34" height="34" viewBox="0 0 34 34">
				<path d="M17 2l14 14-14 12L3 16z" fill="#3cc0e0" />
				<path d="M14 10l9 6-9 6z" fill="#fff" />
				<path d="M7 23l10 9 10-9-4-3-6 5-6-5z" fill="#6d78d8" />
			</svg>
		</div>
		<span class="tb-div"></span>
		<div class="tray">
			<span class="tray-i">{@render ic('sg', 20)}</span>
			<span class="tray-i t-wifi">{@render ic('wifi', 20)}</span>
			<span class="tray-up"></span>
			<span class="tray-i">{@render ic('spk', 20)}</span>
			<span class="tray-i t-plus">{@render ic('plus', 18)}</span>
			<span class="tray-i t-bars">{@render ic('bars', 16)}</span>
			<div class="clock"><span>20:44</span><span>2018/11/27</span></div>
			<span class="show-desk"></span>
		</div>
	</footer>

	<!-- screen recorder frame -->
	<span class="rec line-top"></span>
	<span class="rec line-bottom"></span>
	<span class="rec line-left"></span>
	<span class="rec line-right"></span>
	<span class="rec tl"></span>
	<span class="rec tr-h"></span>
	<span class="rec tr-v"></span>
	<span class="rec bl-h"></span>
	<span class="rec bl-v"></span>
	<span class="rec br-h"></span>
	<span class="rec br-v"></span>
	<span class="rec-dots"></span>

	<!-- application button -->
	<div class="appbtn">
		<svg width="30" height="36" viewBox="0 0 30 36">
			<path d="M6 2h10l7 3 2 10-6 4 7 11-6 3-8-13-2 1-1 10-7-2z" fill="#1a45a8" />
			<path d="M10 5h6l3 6-8 4z" fill="#3f6fd0" />
		</svg>
		<span class="caret black"></span>
	</div>

	<div class="made"><span class="stars">***</span><span>制作</span></div>

	<div class="green-ball">23</div>

	<!-- recorder toolbar -->
	<div class="rec-bar">
		{#each barItems as b}
			<span class="bar-item">{b}</span>
		{/each}
		<svg class="power" width="24" height="28" viewBox="0 0 24 28">
			<path d="M7 7a10 10 0 1 0 10 0M12 2v12" fill="none" stroke="#aaa" stroke-width="2" />
		</svg>
	</div>

	<!-- taskbar thumbnail -->
	<div class="thumb-pop">
		<span class="thumb-ic">{@render ic('ppt', 17)}</span>
		<span>Microsoft PowerPoint - [L3]</span>
	</div>

	<svg class="mouse" width="16" height="22" viewBox="0 0 16 22">
		<path d="M1 1v17l4-4 3 7 3-1-3-7h6z" fill="#fff" stroke="#222" />
	</svg>
</div>

<style>
	:global(body) {
		margin: 0;
		background: #fff;
	}

	* {
		box-sizing: border-box;
	}

	.app {
		position: relative;
		width: 1920px;
		height: 1080px;
		overflow: hidden;
		display: flex;
		flex-direction: column;
		font-family: 'Liberation Sans', 'Noto Sans CJK SC', sans-serif;
		font-size: 12px;
		color: #222;
		background: #eee;
	}

	.ic {
		display: block;
		flex: none;
		fill: none;
		stroke: #444;
		stroke-width: 1;
	}

	.caret {
		display: inline-block;
		width: 0;
		height: 0;
		flex: none;
		border-left: 3px solid transparent;
		border-right: 3px solid transparent;
		border-top: 4px solid #666;
	}

	.caret.dark {
		border-top-color: #333;
		margin-left: 3px;
	}

	.caret.black {
		border-top-color: #111;
		border-left-width: 4px;
		border-right-width: 4px;
	}

	/* title bar */
	.titlebar {
		height: 23px;
		flex: none;
		display: flex;
		align-items: center;
		background: linear-gradient(#e0e0e0, #cfcfcf 40%, #a6a6a6);
		border-bottom: 1px solid #555;
		position: relative;
	}

	.qat {
		display: flex;
		align-items: center;
		padding-left: 40px;
		width: 800px;
		flex: none;
	}

	.qat-item {
		display: flex;
		justify-content: center;
		flex: none;
	}

	.qat-a {
		font-size: 20px;
		font-weight: bold;
		line-height: 18px;
		color: #333;
	}

	.doc-title {
		width: 569px;
		flex: none;
		color: #efefef;
		font-size: 13px;
		white-space: pre;
		padding-top: 1px;
	}

	.search-arrow {
		width: 0;
		height: 0;
		flex: none;
		margin-right: 6px;
		border-top: 4px solid transparent;
		border-bottom: 4px solid transparent;
		border-left: 4px solid #444;
		margin-left: 5px;
	}

	.search {
		width: 180px;
		height: 22px;
		flex: none;
		align-self: flex-start;
		background: #fff;
		border: 1px solid #000;
		font-style: italic;
		color: #888;
		padding: 3px 3px;
		line-height: 16px;
	}

	.title-tools {
		display: flex;
		align-items: center;
		gap: 4px;
		margin-left: 2px;
		width: 340px;
		flex: none;
	}

	.login {
		margin-left: -1px;
		width: 26px;
		flex: none;
	}

	.gap-a {
		width: 51px;
		flex: none;
	}

	.gap-b {
		width: 2px;
		flex: none;
	}

	.gap-c {
		width: 8px;
		flex: none;
	}

	.win-btns {
		position: absolute;
		right: 6px;
		top: 5px;
		display: flex;
		align-items: center;
		gap: 5px;
	}

	.w-min {
		width: 10px;
		height: 3px;
		margin-top: 8px;
		background: #333;
	}

	.w-max {
		width: 10px;
		height: 11px;
		border: 1px solid #333;
		background: #ddd;
		box-shadow: 2px -2px 0 -1px #333;
	}

	.w-close {
		font-size: 11px;
		font-weight: bold;
		width: 9px;
	}

	/* tabs */
	.tabs {
		height: 22px;
		flex: none;
		display: flex;
		align-items: center;
		padding-left: 45px;
		background: linear-gradient(#a4a4a4, #959595);
	}

	.tab {
		padding: 2px 10px 0;
		line-height: 20px;
		color: #2c2c2c;
		white-space: nowrap;
		flex: none;
	}

	.tab.active {
		margin-left: 3px;
		width: 100px;
		padding: 1px 0 0 10px;
		height: 22px;
		background: linear-gradient(#c5e6b2, #ecf5e4);
		border: 1px solid #7fd65f;
		border-bottom: none;
		border-radius: 2px 2px 0 0;
	}

	.tab-toggle {
		width: 13px;
		height: 9px;
		margin: 0 4px 0 25px;
		background: #eee;
		border: 1px solid #444;
		border-radius: 2px;
		flex: none;
	}

	/* ribbon */
	.ribbon {
		height: 93px;
		flex: none;
		display: flex;
		padding-left: 2px;
		background: linear-gradient(#cfe8bf, #a9b7a2 45%, #8c8c8c);
		border-top: 1px solid #7fd65f;
		border-bottom: 1px solid #7fd65f;
	}

	.panel {
		display: flex;
		flex-direction: column;
		flex: none;
		background: #f6f6f6;
		border-right: 1px solid #cfd8cf;
	}

	.body {
		flex: 1;
		display: flex;
		min-height: 0;
	}

	.plabel {
		height: 17px;
		flex: none;
		background: #dadada;
		text-align: center;
		line-height: 18px;
		color: #333;
	}

	.green .plabel {
		background: linear-gradient(#c7e9b0, #e4f3da);
	}

	.p-select {
		width: 48px;
	}

	.bigbtn {
		width: 38px;
		margin: 1px auto;
		background: linear-gradient(#bcd6e8, #a3c7de);
		border: 1px solid #5d9ec9;
		display: flex;
		flex-direction: column;
		align-items: center;
		padding-top: 4px;
		gap: 8px;
		color: #444;
	}

	.p-props {
		width: 46px;
	}

	.col {
		display: flex;
		flex-direction: column;
		align-items: center;
		justify-content: space-between;
		padding: 3px 0 1px;
	}

	.selbtn {
		width: 38px;
		height: 34px;
		background: #bcd6e8;
		border: 1px solid #3f8fc0;
		display: flex;
		justify-content: center;
		align-items: center;
	}

	.p-clip {
		width: 75px;
	}

	.paste {
		width: 50px;
		display: flex;
		flex-direction: column;
		align-items: center;
		padding-top: 3px;
		gap: 2px;
		color: #444;
	}

	.paste .caret {
		border-top-color: #333;
		margin-top: 3px;
	}

	.stack {
		flex: 1;
		display: flex;
		flex-direction: column;
		align-items: center;
		justify-content: space-around;
	}

	.stack.w24 {
		flex: none;
		width: 24px;
	}

	.p-geo {
		width: 171px;
	}

	.geo-list {
		width: 108px;
		display: flex;
		flex-direction: column;
		justify-content: space-around;
		flex: none;
	}

	.geo-row {
		display: flex;
		align-items: center;
		gap: 4px;
		padding-left: 7px;
		color: #444;
	}

	.geo-row .caret {
		margin-left: 6px;
	}

	.p-mod {
		width: 238px;
	}

	.bigs {
		width: 157px;
		flex: none;
		display: grid;
		grid-template-columns: 42px 39px 38px 38px;
		grid-template-rows: 1fr 1fr;
		justify-items: center;
		align-items: center;
	}

	.smalls {
		flex: 1;
		display: grid;
		grid-template-columns: 28px 25px 27px;
		grid-template-rows: repeat(3, 1fr);
		justify-items: center;
		align-items: center;
	}

	.two {
		display: grid;
		grid-template-columns: 1fr 1fr;
		grid-template-rows: 1fr 1fr;
		align-items: center;
		justify-items: center;
	}

	.cell2 {
		display: flex;
		align-items: center;
		gap: 3px;
	}

	.p-view {
		width: 65px;
	}

	.p-meas {
		width: 56px;
	}

	.col2 {
		flex-direction: column;
		align-items: center;
		justify-content: space-around;
	}

	.p-create {
		width: 83px;
	}

	.p-model {
		width: 43px;
		margin-left: 2px;
	}

	.p-model2 {
		width: 81px;
	}

	.tight {
		justify-content: flex-start;
		gap: 5px;
		padding-top: 4px;
	}

	.half {
		width: 50%;
	}

	.two-line {
		text-align: center;
		line-height: 16px;
		color: #444;
	}

	.off .two-line {
		color: #b5b5b5;
	}

	/* options bar */
	.options {
		height: 26px;
		flex: none;
		background: #d9e3d0;
		padding-left: 9px;
		line-height: 31px;
		color: #aaa;
	}

	.main {
		flex: 1;
		display: flex;
		min-height: 0;
	}

	.dock-head {
		height: 18px;
		flex: none;
		background: #b8cad9;
		padding-left: 5px;
		line-height: 20px;
		color: #555;
		display: flex;
		justify-content: space-between;
	}

	.dock-x {
		color: #111;
		font-size: 11px;
		font-weight: bold;
	}

	/* properties */
	.props {
		width: 226px;
		flex: none;
		display: flex;
		flex-direction: column;
		background: #ebebeb;
		border-right: 1px solid #555;
	}

	.props .dock-head {
		width: 218px;
		padding-right: 3px;
	}

	.props-inner {
		width: 218px;
		flex: 1;
		margin: 2px 0 0 2px;
		border-top: 1px solid #777;
		background: #f8f8f8;
		display: flex;
		flex-direction: column;
	}

	.preview {
		height: 72px;
		flex: none;
		padding: 3px 0 0 3px;
		display: flex;
		justify-content: space-between;
		background: linear-gradient(#fafafa 30%, #ededed);
	}

	.thumb {
		width: 65px;
		height: 65px;
		background: #dedede;
		overflow: hidden;
	}

	.thumb-shape {
		display: block;
		filter: blur(1px);
	}

	.preview-arrow {
		align-self: center;
		margin-right: 5px;
		margin-top: 6px;
		width: 0;
		height: 0;
		border-left: 4px solid transparent;
		border-right: 4px solid transparent;
		border-top: 5px solid #999;
	}

	.type-row {
		height: 28px;
		flex: none;
		display: flex;
		align-items: center;
		gap: 4px;
		padding-bottom: 2px;
	}

	.type-select {
		width: 132px;
		height: 24px;
		flex: none;
		margin-right: 4px;
		padding: 0 5px 0 3px;
		display: flex;
		align-items: center;
		justify-content: space-between;
		background: linear-gradient(#fdfdfd, #e4e4e4);
		border: 1px solid #888;
		border-radius: 3px;
		font-size: 12px;
	}

	.type-edit {
		white-space: nowrap;
	}

	.ptable {
		width: 215px;
		flex: none;
		margin-left: 1px;
	}

	.phead {
		height: 20px;
		background: #d3d3d3;
		line-height: 20px;
		padding: 0 8px 0 2px;
		display: flex;
		justify-content: space-between;
	}

	.chev {
		font-size: 11px;
		line-height: 18px;
		font-weight: bold;
		text-shadow: 0 -3px 0 #222;
	}

	.prow {
		height: 20px;
		display: flex;
		border-bottom: 1px dotted #555;
		border-right: 1px dotted #555;
		line-height: 19px;
		background: #fbfbfb;
	}

	.prow.off {
		color: #999;
	}

	.pk {
		width: 108px;
		flex: none;
		padding-left: 10px;
		border-right: 1px dotted #555;
		white-space: nowrap;
	}

	.pv {
		flex: 1;
		padding-left: 2px;
		display: flex;
		align-items: center;
	}

	.pv.input {
		border: 2px solid #222;
		background: #fff;
		padding-left: 1px;
	}

	.check {
		width: 12px;
		height: 12px;
		margin-left: 3px;
		border: 1px solid #aaa;
		background: linear-gradient(#ccc, #f2f2f2);
	}

	.props-foot {
		margin-top: auto;
		height: 22px;
		display: flex;
		align-items: flex-start;
		justify-content: space-between;
		padding: 0 3px;
	}

	.help-link {
		color: #1b5fa8;
		text-decoration: underline;
		line-height: 20px;
	}

	.apply {
		width: 75px;
		height: 20px;
		text-align: center;
		line-height: 18px;
		color: #999;
		background: #efefef;
		border: 1px solid #bbb;
		border-radius: 2px;
	}

	/* drawing area */
	.center {
		width: 1370px;
		flex: none;
		display: flex;
		flex-direction: column;
		border-top: 1px solid #666;
	}

	.center-top {
		flex: 1;
		display: flex;
		min-height: 0;
		background: #eaeaea;
	}

	.viewport {
		display: block;
		flex: none;
	}

	.viewport text {
		font-family: 'Liberation Sans', 'Noto Sans CJK SC', sans-serif;
	}

	.viewport .wm1 {
		font-size: 12px;
		font-weight: bold;
		fill: #0000c8;
	}

	.viewport .wm2 {
		font-family: 'Liberation Mono', monospace;
		font-size: 10.500px;
		font-weight: bold;
		fill: #5c8c00;
	}

	.viewport .cube {
		font-size: 15px;
		fill: #a5a5a5;
	}

	.viewport .cube.light {
		font-size: 12px;
		fill: #b5b5b5;
		stroke: #8c8c8c;
		stroke-width: 0.3px;
	}

	.vscroll {
		width: 18px;
		margin-left: 2px;
		display: flex;
		flex-direction: column;
		align-items: center;
		background: #e6e6e6;
	}

	.up {
		width: 0;
		height: 0;
		flex: none;
		margin-top: 8px;
		border-left: 4px solid transparent;
		border-right: 4px solid transparent;
		border-bottom: 4px solid #444;
	}

	.vthumb {
		width: 14px;
		height: 16px;
		margin-top: 398px;
		background: linear-gradient(90deg, #f6f6f6, #c9c9c9);
		border: 1px solid #999;
		border-radius: 2px;
	}

	.hbar {
		height: 17px;
		flex: none;
		display: flex;
		align-items: center;
		background: linear-gradient(#f8f8f8, #e2e2e2);
		border-bottom: 1px solid #aaa;
	}

	.view-icons {
		margin-left: 229px;
		width: 110px;
		flex: none;
		display: flex;
		align-items: center;
		gap: 6px;
	}

	.left-tri {
		width: 0;
		height: 0;
		border-top: 4px solid transparent;
		border-bottom: 4px solid transparent;
		border-right: 4px solid #444;
	}

	.hthumb {
		width: 15px;
		height: 15px;
		margin-left: 491px;
		background: linear-gradient(#e6e6e6, #bcbcbc);
		border: 1px solid #999;
		border-radius: 2px;
	}

	/* project browser */
	.browser {
		flex: 1;
		display: flex;
		flex-direction: column;
		background: #eee;
	}

	.browser .dock-head {
		padding-left: 4px;
		padding-right: 5px;
	}

	.tree-wrap {
		flex: 1;
		margin-top: 2px;
		display: flex;
		min-height: 0;
		overflow: hidden;
		border-top: 1px solid #777;
		border-left: 1px solid #777;
		background: #fbfbfb;
	}

	.tree {
		width: 306px;
		flex: none;
		padding-top: 1px;
	}

	.row {
		height: 20px;
		display: flex;
		align-items: center;
		white-space: nowrap;
	}

	.cell {
		width: 20px;
		height: 20px;
		flex: none;
		position: relative;
		display: flex;
		align-items: center;
		justify-content: center;
		margin-left: 0;
	}

	.v::before,
	.tee::before,
	.corner::before {
		content: '';
		position: absolute;
		left: 9px;
		top: 0;
		bottom: 0;
		border-left: 1px dotted #888;
	}

	.corner::before {
		bottom: 10px;
	}

	.tee::after,
	.corner::after {
		content: '';
		position: absolute;
		left: 10px;
		top: 10px;
		width: 15px;
		border-top: 1px dotted #888;
	}

	.exp {
		width: 11px;
		height: 11px;
		position: relative;
		z-index: 1;
		margin-left: -1px;
		display: flex;
		background: linear-gradient(#fff, #ddd);
		border: 1px solid #999;
	}

	.tree-ic {
		width: 20px;
		flex: none;
		display: flex;
		justify-content: center;
		background: #fbfbfb;
		position: relative;
	}

	.label {
		margin-left: 8px;
		padding: 0 3px;
		margin-right: 0;
		position: relative;
		left: -3px;
		line-height: 19px;
		background: #fbfbfb;
	}

	.label.icon-label {
		margin-left: 4px;
	}

	.label.sel {
		background: #dedede;
	}

	.label.bold {
		font-weight: bold;
	}

	.tree-scroll {
		flex: 1;
		margin-top: 0;
		margin-right: 2px;
		display: flex;
		flex-direction: column;
		align-items: center;
		background: #e9e9e9;
	}

	.tthumb {
		width: 15px;
		height: 510px;
		margin-top: 8px;
		display: flex;
		align-items: center;
		justify-content: center;
		background: linear-gradient(90deg, #f2f2f2, #bdbdbd);
		border: 1px solid #aaa;
		border-radius: 2px;
	}

	.grip {
		width: 7px;
		height: 7px;
		border-top: 1px solid #555;
		border-bottom: 1px solid #555;
	}

	/* status bar */
	.status {
		height: 25px;
		flex: none;
		display: flex;
		align-items: stretch;
		background: #ececec;
	}

	.status-text {
		width: 1040px;
		flex: none;
		padding-left: 5px;
		line-height: 28px;
		white-space: nowrap;
		word-spacing: 1px;
		font-size: 12px;
	}

	.st-ic {
		width: 23px;
		flex: none;
		display: flex;
		align-items: center;
		justify-content: center;
		margin-top: 5px;
		background: #dedede;
	}

	.st-ic.grey {
		background: #d5d5d5;
		width: 27px;
	}

	.st-zero {
		width: 30px;
		flex: none;
		padding: 3px 0 0 8px;
		font-size: 13px;
		background: #dedede;
		margin-top: 5px;
	}

	.st-select {
		margin-top: 5px;
		background: #fff;
		display: flex;
		align-items: center;
		justify-content: space-between;
		padding: 0 4px 0 2px;
		color: #888;
		flex: none;
	}

	.st-select.sel-a {
		width: 205px;
		justify-content: flex-end;
	}

	.st-select.sel-b {
		width: 155px;
	}

	.ime {
		margin-left: auto;
		margin-right: 23px;
		display: flex;
		align-items: center;
		margin-top: 5px;
	}

	.ime-c {
		width: 22px;
		display: flex;
		justify-content: center;
		flex: none;
	}

	.ime-c.big {
		width: 30px;
		margin-top: -7px;
	}

	.ime-c.eng {
		color: #1f72b8;
		font-weight: bold;
		font-size: 15px;
	}

	/* taskbar */
	.taskbar {
		height: 40px;
		flex: none;
		display: flex;
		align-items: center;
		border-top: 1px solid #3d5566;
		background: #a4c1d6;
		padding-left: 8px;
	}

	.orb {
		width: 50px;
		flex: none;
		margin-right: 1px;
	}

	.tb {
		height: 38px;
		flex: none;
		margin-right: 3px;
		display: flex;
		align-items: center;
		justify-content: center;
		border-radius: 3px;
	}

	.pinned {
		background: linear-gradient(#d9e4ec, #bccfdc);
		border: 1px solid #76889a;
		box-shadow: inset 0 0 0 1px #e8eff4;
	}

	.pinned.light {
		background: linear-gradient(#e6edf2, #d6e1e9);
	}

	.pinned.hot {
		background: linear-gradient(#d8cfc6, #e29871);
	}

	.w59 {
		width: 59px;
	}

	.w60 {
		width: 60px;
		margin-right: 2px;
	}

	.w68 {
		width: 62px;
		margin-right: 3px;
	}

	.w53 {
		width: 54px;
	}

	.tb-div {
		width: 4px;
		height: 38px;
		background: #c4d4df;
		border: 1px solid #7f93a3;
		flex: none;
	}

	.tray {
		margin-left: auto;
		width: 280px;
		height: 39px;
		flex: none;
		display: flex;
		align-items: center;
		padding-left: 29px;
		background: linear-gradient(90deg, #a4c1d6, #7d96a8 14%, #7b93a4);
	}

	.tray-i {
		flex: none;
		display: flex;
	}

	.t-wifi {
		margin-left: 15px;
	}

	.tray-up {
		width: 0;
		height: 0;
		margin: 0 13px 0 12px;
		flex: none;
		border-left: 4px solid transparent;
		border-right: 4px solid transparent;
		border-bottom: 6px solid #f4f4f4;
	}

	.t-plus {
		margin-left: 5px;
	}

	.t-bars {
		margin-left: 6px;
	}

	.clock {
		width: 76px;
		margin-left: 7px;
		flex: none;
		display: flex;
		flex-direction: column;
		align-items: center;
		color: #eef3f6;
		line-height: 18px;
	}

	.show-desk {
		width: 14px;
		height: 39px;
		margin-left: 12px;
		flex: none;
		background: linear-gradient(90deg, #8a9eae, #6d8292);
		border-left: 1px solid #546877;
	}

	/* recorder frame */
	.rec {
		position: absolute;
		background: #d81e35;
		z-index: 5;
	}

	.line-top {
		left: 0;
		right: 0;
		top: 5px;
		height: 1px;
		opacity: 0.8;
	}

	.line-bottom {
		left: 0;
		right: 0;
		top: 1029px;
		height: 1px;
		opacity: 0.8;
	}

	.line-left {
		left: 4px;
		top: 0;
		height: 1032px;
		width: 1px;
		opacity: 0.8;
	}

	.line-right {
		left: 1909px;
		top: 0;
		height: 1032px;
		width: 1px;
		opacity: 0.8;
	}

	.tl {
		left: 0;
		top: 0;
		width: 26px;
		height: 25px;
	}

	.tr-h {
		left: 1888px;
		top: 2px;
		width: 25px;
		height: 4px;
	}

	.tr-v {
		left: 1908px;
		top: 2px;
		width: 5px;
		height: 24px;
	}

	.bl-h {
		left: 0;
		top: 1030px;
		width: 25px;
		height: 3px;
	}

	.bl-v {
		left: 1px;
		top: 1008px;
		width: 4px;
		height: 25px;
	}

	.br-h {
		left: 1888px;
		top: 1031px;
		width: 26px;
		height: 3px;
	}

	.br-v {
		left: 1911px;
		top: 1021px;
		width: 4px;
		height: 13px;
	}

	.rec-dots {
		position: absolute;
		left: 928px;
		top: 0;
		width: 59px;
		height: 5px;
		background: #d81e35;
		border-bottom: 2px dotted #fff;
		border-top: 1px solid #d81e35;
		z-index: 5;
	}

	.appbtn {
		position: absolute;
		left: 0;
		top: 0;
		width: 41px;
		height: 41px;
		z-index: 6;
		border: 1px solid #111;
		background: linear-gradient(135deg, #d81e35 36%, transparent 36%), linear-gradient(#c9c9c9, #6f6f6f);
		display: flex;
		padding: 1px 0 0 4px;
		gap: 1px;
	}

	.appbtn .caret {
		margin-top: 19px;
		border-left-width: 3px;
		border-right-width: 3px;
	}

	.made {
		position: absolute;
		left: 1757px;
		top: 17px;
		z-index: 4;
		display: flex;
		gap: 20px;
		font-size: 30px;
		font-weight: bold;
		line-height: 38px;
		color: #c8102e;
	}

	.stars {
		width: 49px;
		font-size: 42px;
		line-height: 60px;
	}

	.green-ball {
		position: absolute;
		left: 1902px;
		top: 324px;
		width: 46px;
		height: 46px;
		border-radius: 50%;
		z-index: 4;
		padding-left: 3px;
		line-height: 42px;
		color: #d9f5d9;
		font-size: 12px;
		background: radial-gradient(circle at 50% 50%, #3fd94a 60%, #2fae38);
		border: 2px solid #d6e6d6;
		box-shadow: -1px 0 2px #888;
	}

	.rec-bar {
		position: absolute;
		left: 1362px;
		top: 991px;
		width: 558px;
		height: 29px;
		z-index: 7;
		display: flex;
		align-items: center;
		padding-left: 1px;
		background: #3c4441;
		border-radius: 8px 0 0 8px;
		color: #a9aeac;
	}

	.bar-item {
		width: 56.500px;
		flex: none;
		text-align: center;
	}

	.power {
		margin-left: 121px;
		flex: none;
	}

	.thumb-pop {
		position: absolute;
		left: 212px;
		top: 990px;
		width: 248px;
		height: 49px;
		z-index: 7;
		display: flex;
		align-items: center;
		padding-left: 20px;
		gap: 4px;
		background: #6e8094;
		border: 1px solid #dfe6ec;
		color: #eef1f4;
		font-family: 'Open Sans', 'Liberation Sans', sans-serif;
		font-size: 12.400px;
	}

	.thumb-ic {
		display: flex;
		flex: none;
	}

	.mouse {
		position: absolute;
		left: 334px;
		top: 1060px;
		z-index: 8;
	}
</style>
